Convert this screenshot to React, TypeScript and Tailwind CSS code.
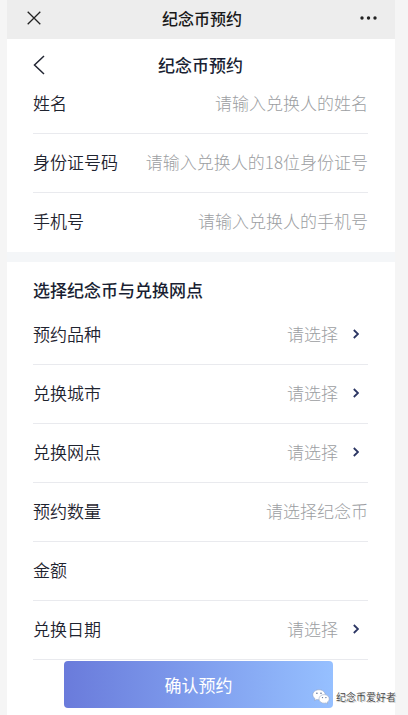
import { useState } from 'react';

interface TextField {
  id: string;
  label: string;
  placeholder: string;
}

interface OrderField extends TextField {
  type: 'select' | 'readonly';
}

const PERSON_FIELDS: TextField[] = [
  { id: 'name', label: '姓名', placeholder: '请输入兑换人的姓名' },
  { id: 'idNumber', label: '身份证号码', placeholder: '请输入兑换人的18位身份证号' },
  { id: 'phone', label: '手机号', placeholder: '请输入兑换人的手机号' },
];

const ORDER_FIELDS: OrderField[] = [
  { id: 'coin', label: '预约品种', placeholder: '请选择', type: 'select' },
  { id: 'city', label: '兑换城市', placeholder: '请选择', type: 'select' },
  { id: 'branch', label: '兑换网点', placeholder: '请选择', type: 'select' },
  { id: 'quantity', label: '预约数量', placeholder: '请选择纪念币', type: 'readonly' },
  { id: 'amount', label: '金额', placeholder: '', type: 'readonly' },
  { id: 'date', label: '兑换日期', placeholder: '请选择', type: 'select' },
];

const ROW = 'flex h-[59px] items-center border-b border-[#e9eaee] pb-0.5';
const LABEL = 'shrink-0 font-[350] text-[#1f2430]';
const INPUT =
  'min-w-0 flex-1 bg-transparent text-right text-[#1f2430] outline-none placeholder:font-light placeholder:text-[#9c9ea2]';

function WeChatIcon() {
  return (
    <svg viewBox="0 0 18 16" className="h-4 w-[18px]" aria-hidden="true">
      <path
        d="M7 .8C3.500.8.8 3 .8 5.800c0 1.600.9 3 2.300 3.900l-.6 1.900 2.200-1.100c.7.200 1.500.3 2.300.3 3.500 0 6.200-2.300 6.200-5S10.500.8 7 .8Z"
        fill="#fff"
        stroke="#8b9bb8"
        strokeWidth=".5"
      />
      <path
        d="M12.200 5.600c-2.900 0-5.200 1.900-5.200 4.300s2.300 4.300 5.200 4.300c.6 0 1.200-.1 1.700-.3l1.800 1-.5-1.700c1.300-.8 2-2 2-3.300 0-2.400-2.200-4.300-5-4.300Z"
        fill="#fff"
        stroke="#8b9bb8"
        strokeWidth=".5"
      />
      <g fill="#5b6f92">
        <circle cx="4.900" cy="4.300" r=".8" />
        <circle cx="9" cy="4.300" r=".8" />
        <circle cx="10.500" cy="8.600" r=".7" />
        <circle cx="13.900" cy="8.600" r=".7" />
      </g>
    </svg>
  );
}

function SelectField({ id, placeholder }: { id: string; placeholder: string }) {
  return (
    <div className="relative flex min-w-0 flex-1 items-center">
      <select
        id={id}
        className="w-full appearance-none bg-transparent pr-[30px] text-right font-light text-[#9c9ea2] outline-none [text-align-last:right]"
      >
        <option value="">{placeholder}</option>
      </select>
      <svg
        viewBox="0 0 6 10"
        className="pointer-events-none absolute right-[9px] h-2.5 w-1.5"
        fill="none"
        stroke="#2b3563"
        strokeWidth="1.800"
        aria-hidden="true"
      >
        <path d="M.8 1 5 5 .8 9" />
      </svg>
    </div>
  );
}

export default function App() {
  const [person, setPerson] = useState<Record<string, string>>({});

  return (
    <div className="relative min-h-screen bg-[#f5f5f5] pl-[7px] pr-[13px] font-['Noto_Sans_CJK_SC',sans-serif] text-[17px] leading-6">
      <div className="flex min-h-screen flex-col bg-[#f4f6f8]">
        {/* Browser bar */}
        <header className="grid h-[39px] grid-cols-[1fr_auto_1fr] items-center bg-[#ededed] pb-1 pl-5 pr-[18px]">
          <button type="button" aria-label="关闭" className="justify-self-start">
            <svg viewBox="0 0 14 14" className="h-3.5 w-3.5" fill="none" stroke="#222" strokeWidth="1.300">
              <path d="m.7.7 12.600 12.600M13.300.7.7 13.300" />
            </svg>
          </button>
          <span className="text-base font-medium text-[#191919]">纪念币预约</span>
          <button type="button" aria-label="更多" className="justify-self-end">
            <svg viewBox="0 0 17 4" className="h-1 w-[17px]" fill="#222">
              <circle cx="2" cy="2" r="1.700" />
              <circle cx="8.500" cy="2" r="1.700" />
              <circle cx="15" cy="2" r="1.700" />
            </svg>
          </button>
        </header>

        <main className="flex flex-1 flex-col gap-2.5">
          <section className="bg-white pl-[26px] pr-[27px]">
            <div className="grid h-9 grid-cols-[1fr_auto_1fr] items-center pt-3.5">
              <button type="button" aria-label="返回" className="justify-self-start">
                <svg viewBox="0 0 12 20" className="h-5 w-3" fill="none" stroke="#222633" strokeWidth="1.500">
                  <path d="M11 1 1.500 10 11 19" />
                </svg>
              </button>
              <h1 className="font-medium text-[#1a1f33]">纪念币预约</h1>
            </div>
            {PERSON_FIELDS.map((f) => (
              <div key={f.id} className={`${ROW} last:border-transparent`}>
                <label htmlFor={f.id} className={LABEL}>
                  {f.label}
                </label>
                <input
                  id={f.id}
                  value={person[f.id] ?? ''}
                  onChange={(e) => setPerson({ ...person, [f.id]: e.target.value })}
                  placeholder={f.placeholder}
                  className={INPUT}
                />
              </div>
            ))}
          </section>

          <section className="flex-1 bg-white">
            <div className="pl-[26px] pr-[27px]">
              <h2 className="h-11 pt-4 font-medium text-[#1a1f33]">选择纪念币与兑换网点</h2>
              {ORDER_FIELDS.map((f) => (
                <div key={f.id} className={ROW}>
                  <label htmlFor={f.id} className={LABEL}>
                    {f.label}
                  </label>
                  {f.type === 'select' ? (
                    <SelectField id={f.id} placeholder={f.placeholder} />
                  ) : (
                    <input id={f.id} readOnly placeholder={f.placeholder} className={INPUT} />
                  )}
                </div>
              ))}
            </div>
            <div className="pl-[57px] pr-[62px] pt-px">
              <button
                type="button"
                className="h-[47px] w-full rounded bg-linear-to-r from-[#6a7bdb] to-[#96c0ff] text-white"
              >
                确认预约
              </button>
            </div>
          </section>
        </main>
      </div>

      {/* Account watermark */}
      <div className="absolute bottom-2.5 right-3 flex items-center gap-1.5">
        <WeChatIcon />
        <span className="text-[10px] font-[350] leading-4 text-[#444] [text-shadow:1px_1px_0_#ccc]">纪念币爱好者</span>
      </div>
    </div>
  );
}
